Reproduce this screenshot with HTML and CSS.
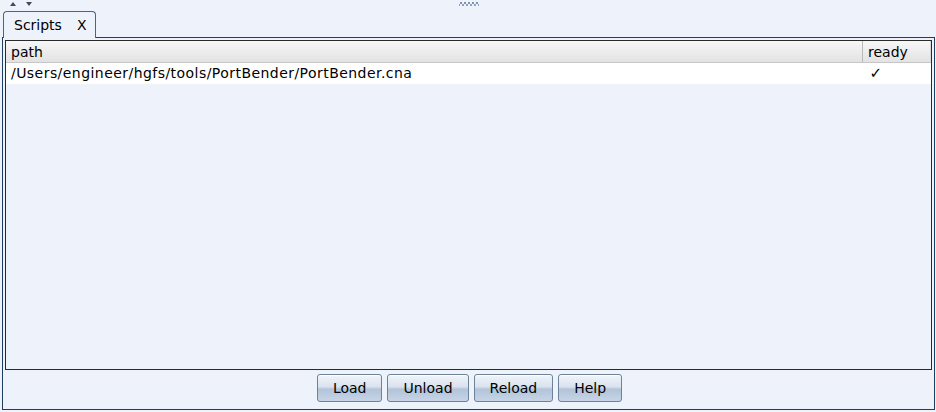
FILE: index.html
```html
<!DOCTYPE html>
<html lang="en">
<head>
  <meta charset="UTF-8">
  <title>Scripts</title>
  <link rel="stylesheet" href="styles.css">
</head>
<body>
  <div class="topbar">
    <div class="arrows">
      <svg width="6" height="4" viewBox="0 0 6 4"><path d="M0 4 L3 0 L6 4 Z" fill="#3d4b5c"></path></svg>
      <svg width="6" height="4" viewBox="0 0 6 4"><path d="M0 0 L6 0 L3 4 Z" fill="#3d4b5c"></path></svg>
    </div>
    <div class="grip"></div>
  </div>

  <div class="tabs">
    <div class="tab">Scripts<span class="tab__close">X</span></div>
  </div>

  <div class="panel">
    <div class="table-box">
      <table class="scripts">
        <thead>
          <tr>
            <th class="col-path">path</th>
            <th class="col-ready">ready</th>
          </tr>
        </thead>
        <tbody>
          <tr>
            <td>/Users/engineer/hgfs/tools/PortBender/PortBender.cna</td>
            <td class="check">&#10003;</td>
          </tr>
        </tbody>
      </table>
    </div>

    <div class="buttons">
      <button class="btn">Load</button>
      <button class="btn">Unload</button>
      <button class="btn">Reload</button>
      <button class="btn">Help</button>
    </div>
  </div>
</body>
</html>
```

FILE: styles.css
```css
body {
  background-color: #eef2fa;
  color: #000;
  font-family: "DejaVu Sans", "Liberation Sans", sans-serif;
  font-size: 14px;
  margin: 0;
  height: 412px;
  overflow: hidden;
}

.topbar {
  position: relative;
  height: 11px;
}

.arrows {
  display: flex;
  gap: 10px;
  padding: 2px 0 0 10px;
}

.arrows svg {
  display: block;
}

/* dotted split-pane handle */
.grip {
  position: absolute;
  left: 459px;
  top: 1px;
  width: 20px;
  height: 5px;
  background:
    radial-gradient(circle, #7f93ad 0.8px, transparent 1px) 0 0 / 4px 4px,
    radial-gradient(circle, #8fa2ba 0.8px, transparent 1px) 2px 2px / 4px 4px;
  background-repeat: repeat-x;
}

.tabs {
  display: flex;
  padding-left: 3px;
  height: 26px;
  position: relative;
  z-index: 1;
}

.tab {
  box-sizing: border-box;
  width: 93px;
  height: 27px;
  border: 1px solid #4a6584;
  border-bottom: none;
  border-radius: 4px 4px 0 0;
  background-color: #eef2fa;
  padding: 5px 0 0 10px;
  line-height: 17px;
}

.tab__close {
  margin-left: 15px;
}

.panel {
  display: flex;
  flex-direction: column;
  box-sizing: border-box;
  height: 373px;
  margin: 0 1px 0 2px;
  border: 1px solid #1d3e60;
  padding: 2px 2px 0 2px;
}

.table-box {
  box-sizing: border-box;
  height: 330px;
  border: 1px solid #2a2a2a;
  background-color: #eef2fa;
}

.scripts {
  width: 100%;
  border-collapse: collapse;
  table-layout: fixed;
}

.scripts th {
  height: 21px;
  padding: 0 0 0 5px;
  text-align: left;
  font-weight: normal;
  background: linear-gradient(#f7f7f7, #e2e2e2);
  border-right: 1px solid #b9b9b9;
  border-bottom: 1px solid #c6c6c6;
  line-height: 20px;
}

.scripts .col-ready {
  width: 62px;
  border-right: 1px solid #d8d8d8;
}

.scripts td {
  height: 21px;
  padding: 0 0 0 5px;
  background-color: #fff;
  line-height: 21px;
  white-space: nowrap;
  letter-spacing: 0.45px;
}

.scripts .check {
  padding-left: 7px;
  font-weight: bold;
  font-size: 15px;
}

.buttons {
  display: flex;
  justify-content: center;
  gap: 5px;
  padding: 4px 0 0 0;
  margin-left: 2px;
}

.btn {
  box-sizing: border-box;
  height: 28px;
  padding: 0 15px;
  font-family: inherit;
  font-size: 14px;
  color: #000;
  border: 1px solid #6f8197;
  border-radius: 3px;
  background: linear-gradient(#f1f5fa 0%, #d9e2ee 45%, #b3c4d9 55%, #c6d4e6 100%);
  box-shadow: inset 0 1px 0 #ffffff;
}
```
